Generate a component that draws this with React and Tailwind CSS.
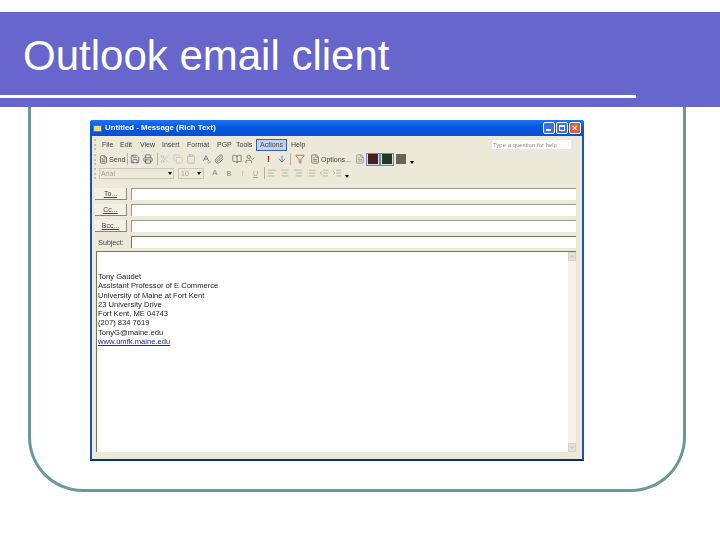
import { AlignCenter, AlignLeft, AlignRight, ArrowDown, BookOpen, ChevronDown, ChevronUp, Clipboard, Copy, FileText, Filter, IndentDecrease, IndentIncrease, List, Paperclip, Printer, Save, Scissors, SpellCheck, UserCheck } from "lucide-react"

const menus = [
  ["File", "w-[18px] ml-[3px]"],
  ["Edit", "w-[20px]"],
  ["View", "w-[22px]"],
  ["Insert", "w-[25px]"],
  ["Format", "w-[30px]"],
  ["PGP", "w-[19px]"],
  ["Tools", "w-[19px]"],
]

const contact = [
  "Tony Gaudet",
  "Assistant Professor of E Commerce",
  "University of Maine at Fort Kent",
  "23 University Drive",
  "Fort Kent, ME 04743",
  "(207) 834 7619",
  "TonyG@maine.edu",
]

const fields = ["To...", "Cc...", "Bcc..."]

function Grip() {
  return <div className="w-[2px] h-[11px] mr-[3px] border-l-2 border-dotted border-[#c4c1ae]" />
}

function Sep() {
  return <div className="w-px h-[12px] bg-[#b5b2a0]" />
}

function Tool({ icon: Icon, color = "text-[#6b6b6b]", className = "" }) {
  return (
    <div className={`w-[13px] flex justify-center ${className}`}>
      <Icon size={10} strokeWidth={1.6} className={color} />
    </div>
  )
}

function Swatch({ color, active }) {
  return (
    <div className={`w-[14px] h-[13px] flex items-center justify-center ${active ? "border border-[#6f86b8] bg-[#d8dce8]" : ""}`}>
      <div className={`w-[10px] h-[10px] ${color}`} />
    </div>
  )
}

function DropArrow({ className = "" }) {
  return <div className={`w-0 h-0 border-x-[2.5px] border-x-transparent border-t-[3px] border-t-black ${className}`} />
}

function OutlookWindow() {
  return (
    <div className="w-[494px] h-[341px] ml-[59px] mt-[13px] flex flex-col bg-[#ece9d8] border-x-2 border-b-2 border-x-[#1c4fc0] border-b-[#0a2a86] rounded-t-[3px] font-['Liberation_Sans',sans-serif] text-[7px] leading-none text-[#444]">
      {/* title bar */}
      <div className="h-[16px] -mx-[2px] px-[3px] flex items-center rounded-t-[3px] bg-gradient-to-b from-[#1f74f0] via-[#0455e0] to-[#0a4fd0]">
        <div className="w-[9px] h-[7px] bg-[#e8d67c] border border-[#7d7440] mr-[3px]" />
        <span className="text-white text-[7.8px] font-bold blur-[0.4px]">Untitled - Message (Rich Text)</span>
        <div className="ml-auto flex gap-[1px]">
          <div className="w-[12px] h-[12px] rounded-[2px] border border-white bg-[#3d72e0] flex items-end p-[2px]">
            <div className="w-[5px] h-[2px] bg-white" />
          </div>
          <div className="w-[12px] h-[12px] rounded-[2px] border border-white bg-[#3d72e0] p-[2px]">
            <div className="w-full h-full border border-white border-t-2" />
          </div>
          <div className="w-[12px] h-[12px] rounded-[2px] border border-white bg-[#d9603c] text-white text-[9px] font-bold flex items-center justify-center">×</div>
        </div>
      </div>

      {/* menu bar */}
      <div className="h-[15px] mt-[1px] px-[2px] flex items-center blur-[0.4px]">
        <Grip />
        {menus.map(([name, cls]) => (
          <span key={name} className={cls}>{name}</span>
        ))}
        <span className="w-[31px] h-[12px] ml-[1px] mr-[4px] flex items-center justify-center bg-[#c1d2ee] border border-[#3a5fa8]">Actions</span>
        <span>Help</span>
        <div className="ml-auto w-[79px] h-[9px] mr-[9px] bg-white flex items-center px-[1px] text-[#8a8a8a] text-[6px]">Type a question for help</div>
      </div>

      {/* standard toolbar */}
      <div className="h-[14px] px-[2px] flex items-center blur-[0.3px]">
        <Grip />
        <FileText size={9} className="text-[#555]" />
        <span className="ml-[1px] w-[18px]">Send</span>
        <Sep />
        <Tool icon={Save} color="text-[#3c4a63]" />
        <Tool icon={Printer} color="text-[#444]" className="mr-[3px]" />
        <Sep />
        <Tool icon={Scissors} color="text-[#bbb]" />
        <Tool icon={Copy} color="text-[#bbb]" />
        <Tool icon={Clipboard} color="text-[#aaa]" className="mr-[2px]" />
        <Tool icon={SpellCheck} color="text-[#4a5a6a]" />
        <Tool icon={Paperclip} color="text-[#555]" className="mr-[5px]" />
        <Tool icon={BookOpen} color="text-[#555]" />
        <Tool icon={UserCheck} color="text-[#555]" className="mr-[6px]" />
        <div className="w-[13px] text-center text-[#d02020] text-[9px] font-bold">!</div>
        <Tool icon={ArrowDown} color="text-[#2a4fb0]" className="mr-[2px]" />
        <Sep />
        <Tool icon={Filter} color="text-[#a03030]" className="ml-[2px] mr-[2px]" />
        <Tool icon={FileText} color="text-[#555]" />
        <span className="w-[32px]">Options...</span>
        <Tool icon={FileText} color="text-[#777]" />
        <Swatch color="bg-[#4a1f1f]" active />
        <Swatch color="bg-[#1f3a1f]" active />
        <Swatch color="bg-[#666655]" />
        <DropArrow className="ml-[2px] mt-[6px]" />
      </div>

      {/* formatting toolbar */}
      <div className="h-[14px] px-[2px] flex items-center text-[#a5a294] blur-[0.3px]">
        <Grip />
        <div className="w-[75px] h-[11px] flex items-center justify-between px-[1px] border border-[#cbc8b6]">
          <span>Arial</span>
          <DropArrow className="border-t-[#888]" />
        </div>
        <div className="w-[26px] h-[11px] ml-[4px] flex items-center justify-between px-[2px] border border-[#cbc8b6]">
          <span>10</span>
          <DropArrow className="border-t-[#888]" />
        </div>
        <div className="ml-[4px] w-[14px] text-center font-bold text-[8px]">A</div>
        <div className="w-[14px] text-center font-bold">B</div>
        <div className="w-[13px] text-center italic">I</div>
        <div className="w-[13px] mr-[2px] text-center underline">U</div>
        <Sep />
        <Tool icon={AlignLeft} color="text-[#a5a294]" />
        <Tool icon={AlignCenter} color="text-[#a5a294]" />
        <Tool icon={AlignRight} color="text-[#a5a294]" />
        <Tool icon={List} color="text-[#a5a294]" />
        <Tool icon={IndentDecrease} color="text-[#a5a294]" />
        <Tool icon={IndentIncrease} color="text-[#a5a294]" />
        <DropArrow className="ml-[2px] mt-[6px]" />
      </div>

      {/* address fields */}
      <div className="mt-[8px] pl-[3px] pr-[6px] flex flex-col gap-[4px] blur-[0.3px]">
        {fields.map(f => (
          <div key={f} className="h-[12px] flex">
            <div className="w-[32px] h-[12px] flex items-center justify-center bg-[#f3f1e6] border-r border-b border-[#8a8776] underline">{f}</div>
            <div className="flex-1 ml-[4px] bg-white border-t border-l border-[#9c9a88]" />
          </div>
        ))}
        <div className="h-[12px] flex">
          <div className="w-[32px] flex items-center justify-center">Subject:</div>
          <div className="flex-1 ml-[4px] bg-white border-t border-l border-[#77756a]" />
        </div>
      </div>

      {/* message body */}
      <div className="flex-1 mt-[3px] ml-[4px] mr-[6px] mb-[7px] flex bg-white border-t border-l border-[#77756a]">
        <div className="flex-1 pt-[20px] pl-[1px] text-[7.6px] leading-[9.3px] text-[#222] blur-[0.35px]">
          {contact.map(line => (
            <div key={line}>{line}</div>
          ))}
          <div className="text-[#1c2a90] underline">www.umfk.maine.edu</div>
        </div>
        <div className="w-[8px] flex flex-col justify-between bg-[#f3f2ec]">
          <div className="h-[9px] flex items-center justify-center bg-[#e4e2d6] border border-[#d5d3c6]">
            <ChevronUp size={7} className="text-[#999]" />
          </div>
          <div className="h-[9px] flex items-center justify-center bg-[#e4e2d6] border border-[#d5d3c6]">
            <ChevronDown size={7} className="text-[#999]" />
          </div>
        </div>
      </div>
    </div>
  )
}

export default function App() {
  return (
    <div className="w-[720px] h-[540px] pt-[12px] bg-white overflow-hidden">
      <div className="h-[95px] bg-[#6666cc] pt-[21px]">
        <h1 className="pl-[23px] h-[62px] font-['Liberation_Sans',sans-serif] text-[42px] leading-[46px] text-white">Outlook email client</h1>
        <div className="w-[636px] h-[3px] bg-white" />
      </div>
      <div className="w-[658px] h-[385px] ml-[28px] border-x-[3px] border-b-[3px] border-[#6b9999] rounded-b-[55px] overflow-hidden">
        <OutlookWindow />
      </div>
    </div>
  )
}
